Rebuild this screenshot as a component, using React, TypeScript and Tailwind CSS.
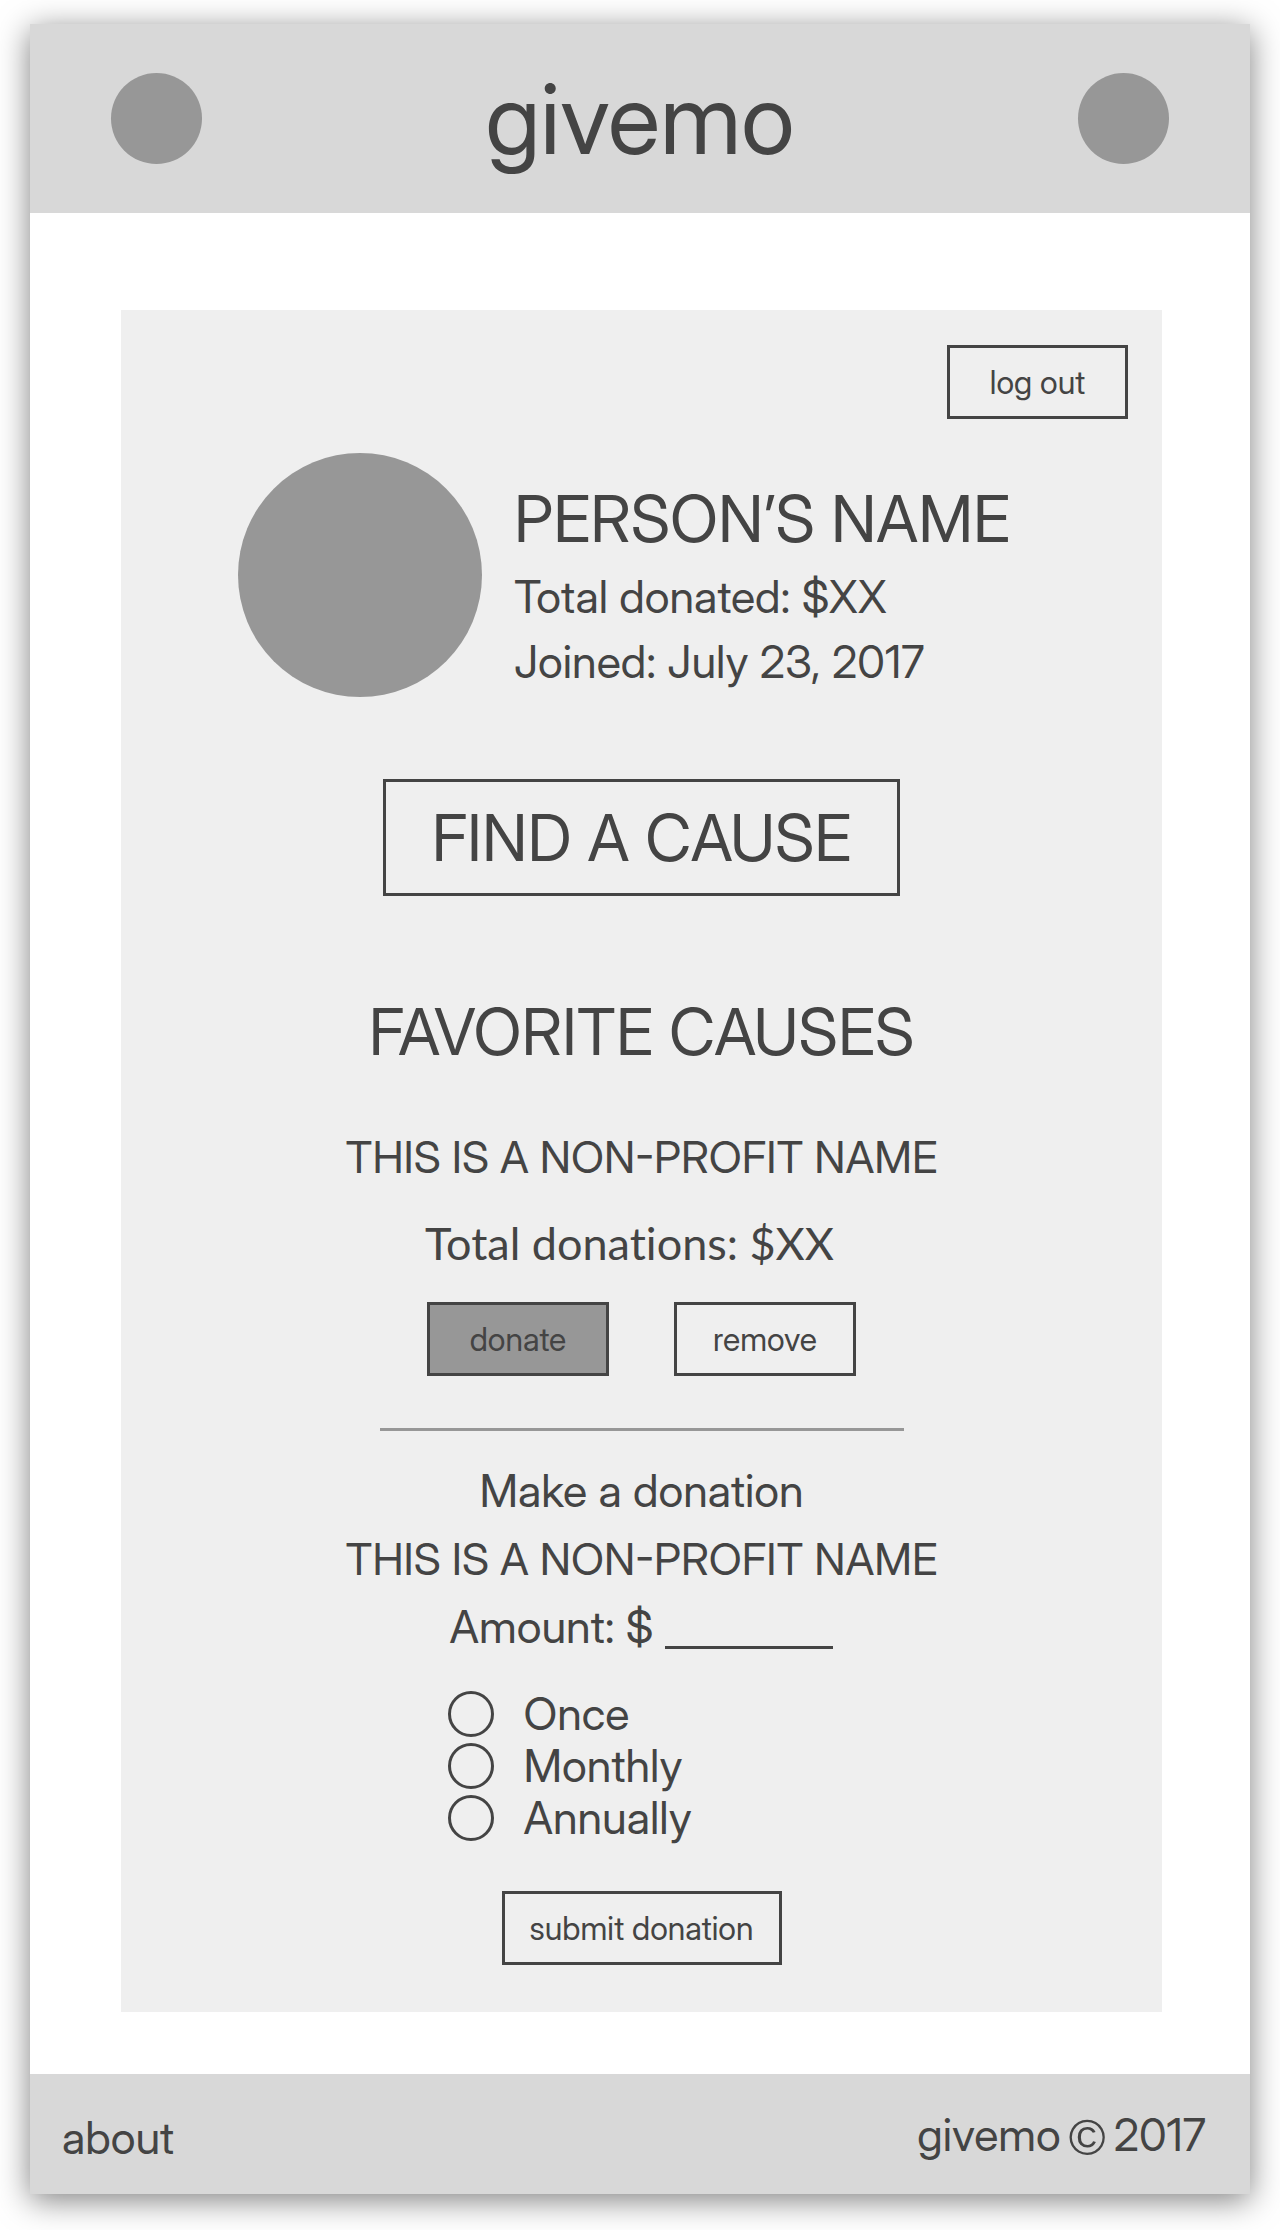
import type { ButtonHTMLAttributes } from "react";

const frequencies = ["Once", "Monthly", "Annually"];

function SmallButton({ className = "", children, ...rest }: ButtonHTMLAttributes<HTMLButtonElement>) {
  return (
    <button
      type="button"
      className={`h-[74px] cursor-pointer border-3 border-[#444] pt-0.5 text-center text-[32px] leading-9 ${className}`}
      {...rest}
    >
      {children}
    </button>
  );
}

function Header() {
  return (
    <header className="flex items-center justify-between bg-[#d8d8d8] px-[81px] py-[49px]">
      <button type="button" aria-label="Menu" className="size-[91px] rounded-full bg-[#979797]" />
      <h1 className="text-[97px] leading-[91px]">givemo</h1>
      <button type="button" aria-label="Profile" className="size-[91px] rounded-full bg-[#979797]" />
    </header>
  );
}

function Profile() {
  return (
    <section className="mt-[34px] flex items-start gap-8 self-start pl-[117px]">
      <div role="img" aria-label="Profile picture" className="size-[244px] shrink-0 rounded-full bg-[#979797]" />
      <div className="pt-5">
        <h2 className="text-[64px] leading-[91px]">PERSON’S NAME</h2>
        <p className="text-[45px] leading-[65px]">Total donated: $XX</p>
        <p className="text-[45px] leading-[65px]">Joined: July 23, 2017</p>
      </div>
    </section>
  );
}

function Favorites() {
  return (
    <section className="mt-24 flex flex-col items-center">
      <h2 className="text-[64px] leading-[80px]">FAVORITE CAUSES</h2>
      <h3 className="mt-[55px] text-[44px] leading-[60px]">THIS IS A NON-PROFIT NAME</h3>
      <p className="mt-[26px] pr-6 font-[Lato,sans-serif] text-[45px] leading-[60px] [font-variant-ligatures:none]">
        Total donations: $XX
      </p>
      <div className="mt-[29px] flex gap-[65px]">
        <SmallButton className="w-[182px] bg-[#979797]">donate</SmallButton>
        <SmallButton className="w-[182px]">remove</SmallButton>
      </div>
    </section>
  );
}

function DonationForm() {
  return (
    <form className="mt-[26px] flex flex-col items-center text-[45px]" onSubmit={(e) => e.preventDefault()}>
      <h2 className="leading-[68px]">Make a donation</h2>
      <h3 className="text-[44px] leading-[68px]">THIS IS A NON-PROFIT NAME</h3>
      <div className="flex items-center gap-3 leading-[68px]">
        <label htmlFor="amount">Amount: $</label>
        <input
          id="amount"
          type="text"
          inputMode="decimal"
          className="h-11 w-[168px] border-b-3 border-[#444] bg-transparent leading-10 outline-none"
        />
      </div>
      <fieldset aria-label="Frequency" className="mt-[27px] w-[388px]">
        {frequencies.map((name) => (
          <label key={name} className="flex h-[52px] items-center gap-[30px] leading-[50px]">
            <input
              type="radio"
              name="frequency"
              value={name}
              className="size-[46px] appearance-none rounded-full border-3 border-[#444] checked:bg-[#979797]"
            />
            {name}
          </label>
        ))}
      </fieldset>
      <SmallButton type="submit" className="mt-[47px] w-[280px]">
        submit donation
      </SmallButton>
    </form>
  );
}

function Footer() {
  return (
    <footer className="flex items-center justify-between bg-[#d8d8d8] pt-7 pr-11 pb-[26px] pl-8 text-[45px] leading-[60px]">
      <nav className="pt-1.5">
        <a href="#about">about</a>
      </nav>
      <p className="flex items-start gap-2 leading-[66px]">
        <span>givemo</span>
        <span className="pt-1.5 font-['Liberation_Sans',sans-serif] text-[50px] leading-[60px]">©</span>
        <span>2017</span>
      </p>
    </footer>
  );
}

export default function App() {
  return (
    <div className="bg-white px-[30px] pt-6 pb-9 font-['Inter_Display',Inter,sans-serif] text-[#444]">
      <div className="bg-white shadow-[0_6px_30px_rgba(0,0,0,0.5)]">
        <Header />
        <main className="mt-[97px] mr-[88px] mb-[62px] ml-[91px] flex flex-col items-center bg-[#efefef] pt-[35px] pb-[47px]">
          <SmallButton className="mr-[34px] w-[181px] self-end">log out</SmallButton>
          <Profile />
          <button
            type="button"
            className="mt-[82px] h-[117px] w-[517px] cursor-pointer border-3 border-[#444] text-[64px] leading-[80px]"
          >
            FIND A CAUSE
          </button>
          <Favorites />
          <hr className="mt-[52px] w-[524px] border-t-3 border-[#979797]" />
          <DonationForm />
        </main>
        <Footer />
      </div>
    </div>
  );
}
